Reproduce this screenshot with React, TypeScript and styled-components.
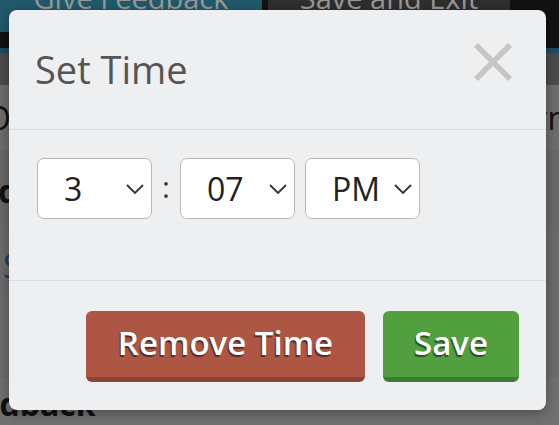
import styled, { createGlobalStyle } from "styled-components";

const GlobalStyle = createGlobalStyle`
  * { box-sizing: border-box; }
  html, body { margin: 0; padding: 0; }
  body {
    font-family: "Open Sans", "Noto Sans", "DejaVu Sans", sans-serif;
    background: #6b6b6b;
  }
`;

const Page = styled.div`
  position: relative;
  width: 100vw;
  height: 100vh;
  overflow: hidden;
  background: #6b6b6b;
`;

const TopBar = styled.div`
  height: 48px;
  display: flex;
  align-items: flex-end;
  gap: 6px;
  padding-bottom: 16px;
  background: #121212;
  overflow: hidden;
`;

const BarButton = styled.div<{ tone: "teal" | "dark"; width: number }>`
  flex: 0 0 ${(p) => p.width}px;
  height: 70px;
  display: flex;
  align-items: flex-end;
  justify-content: center;
  padding-bottom: 20px;
  font-size: 29px;
  line-height: 29px;
  color: #9a9a9a;
  background: ${(p) => (p.tone === "teal" ? "#215a6c" : "#2f2f2f")};
`;

const BlueLine = styled.div`
  height: 5px;
  background: #1f4a66;
`;

const SubBar = styled.div`
  height: 32px;
  background: #4c4c4c;
`;

const Content = styled.div`
  display: flex;
  flex-direction: column;
`;

const BgRow = styled.div<{ h: number; shade: string }>`
  height: ${(p) => p.h}px;
  display: flex;
  align-items: center;
  justify-content: space-between;
  background: ${(p) => p.shade};
  white-space: nowrap;
`;

const BgText = styled.span<{ shift: number; bold?: boolean; link?: boolean }>`
  margin-left: ${(p) => p.shift}px;
  font-size: 32px;
  font-weight: ${(p) => (p.bold ? 700 : 400)};
  color: ${(p) => (p.link ? "#1d3c5c" : "#111")};
`;

const Overlay = styled.div`
  position: absolute;
  inset: 0;
  padding: 10px 13px 15px 9px;
`;

const Modal = styled.div`
  width: 537px;
  height: 400px;
  background: #eeeff1;
  border-radius: 8px;
  box-shadow: 0 3px 14px rgba(0, 0, 0, 0.35);
  display: flex;
  flex-direction: column;
  overflow: hidden;
`;

const Header = styled.div`
  height: 120px;
  display: flex;
  justify-content: space-between;
  align-items: flex-start;
  padding: 32px 33px 0 26px;
  border-bottom: 1px solid #dcdde0;
`;

const Title = styled.h2`
  margin: 4px 0 0;
  font-size: 38px;
  line-height: 46px;
  font-weight: 400;
  color: #555;
`;

const CloseButton = styled.button`
  width: 40px;
  height: 40px;
  padding: 0;
  border: none;
  background: transparent;
  cursor: pointer;
  svg { display: block; }
`;

const Body = styled.div`
  height: 151px;
  display: flex;
  align-items: flex-start;
  padding: 28px 0 0 28px;
  border-bottom: 1px solid #dcdde0;
`;

const TimeRow = styled.div`
  display: flex;
  align-items: center;
`;

const SelectBox = styled.div<{ gapAfter?: number }>`
  width: 115px;
  height: 61px;
  display: flex;
  align-items: center;
  justify-content: space-between;
  padding: 0 7px 0 26px;
  margin-right: ${(p) => p.gapAfter ?? 0}px;
  background: #fff;
  border: 1px solid #b8b8b8;
  border-radius: 7px;
  font-size: 32px;
  color: #222;
  svg { display: block; }
`;

const Colon = styled.span`
  width: 28px;
  text-align: center;
  font-size: 30px;
  line-height: 30px;
  color: #333;
  margin-top: -4px;
`;

const Footer = styled.div`
  flex: 1;
  display: flex;
  justify-content: flex-end;
  align-items: flex-start;
  gap: 18px;
  padding: 30px 27px 0 0;
`;

const ActionButton = styled.button<{ variant: "danger" | "success"; width: number }>`
  width: ${(p) => p.width}px;
  height: 71px;
  padding: 0 0 3px;
  border: none;
  border-bottom: 5px solid ${(p) => (p.variant === "danger" ? "#8c4334" : "#3e7d30")};
  border-radius: 6px;
  background: ${(p) => (p.variant === "danger" ? "#ad5644" : "#529f3f")};
  color: #fff;
  font-family: "Open Sans", "Noto Sans", sans-serif;
  font-size: 33px;
  font-weight: 600;
  text-shadow: -1px 2px 1px rgba(0, 0, 0, 0.5);
  cursor: pointer;
`;

function Chevron() {
  return (
    <svg width="18" height="10" viewBox="0 0 18 10">
      <path d="M1 1 L9 9 L17 1" fill="none" stroke="#333" strokeWidth="1.8" />
    </svg>
  );
}

export default function App() {
  return (
    <>
      <GlobalStyle />
      <Page>
        <TopBar>
          <BarButton tone="teal" width={262}>Give Feedback</BarButton>
          <BarButton tone="dark" width={242}>Save and Exit</BarButton>
        </TopBar>
        <BlueLine />
        <SubBar />
        <Content>
          <BgRow h={65} shade="#6e6e6e">
            <BgText shift={-14}>Options</BgText>
            <BgText shift={0} style={{ marginRight: -18 }}>Form</BgText>
          </BgRow>
          <BgRow h={80} shade="#6a6a6a">
            <BgText shift={-44} bold>Add</BgText>
          </BgRow>
          <BgRow h={70} shade="#6c6c6c">
            <BgText shift={3} link>Show</BgText>
          </BgRow>
          <BgRow h={78} shade="#6d6d6d">
            <span />
          </BgRow>
          <BgRow h={50} shade="#717171">
            <BgText shift={-56} bold>Feedback</BgText>
          </BgRow>
        </Content>

        <Overlay>
          <Modal>
            <Header>
              <Title>Set Time</Title>
              <CloseButton aria-label="Close">
                <svg width="40" height="40" viewBox="0 0 40 40">
                  <path d="M3 3 L37 37 M37 3 L3 37" stroke="#c5c5c5" strokeWidth="5.5" />
                </svg>
              </CloseButton>
            </Header>
            <Body>
              <TimeRow>
                <SelectBox>
                  <span>3</span>
                  <Chevron />
                </SelectBox>
                <Colon>:</Colon>
                <SelectBox gapAfter={10}>
                  <span>07</span>
                  <Chevron />
                </SelectBox>
                <SelectBox>
                  <span>PM</span>
                  <Chevron />
                </SelectBox>
              </TimeRow>
            </Body>
            <Footer>
              <ActionButton variant="danger" width={279}>Remove Time</ActionButton>
              <ActionButton variant="success" width={136}>Save</ActionButton>
            </Footer>
          </Modal>
        </Overlay>
      </Page>
    </>
  );
}
